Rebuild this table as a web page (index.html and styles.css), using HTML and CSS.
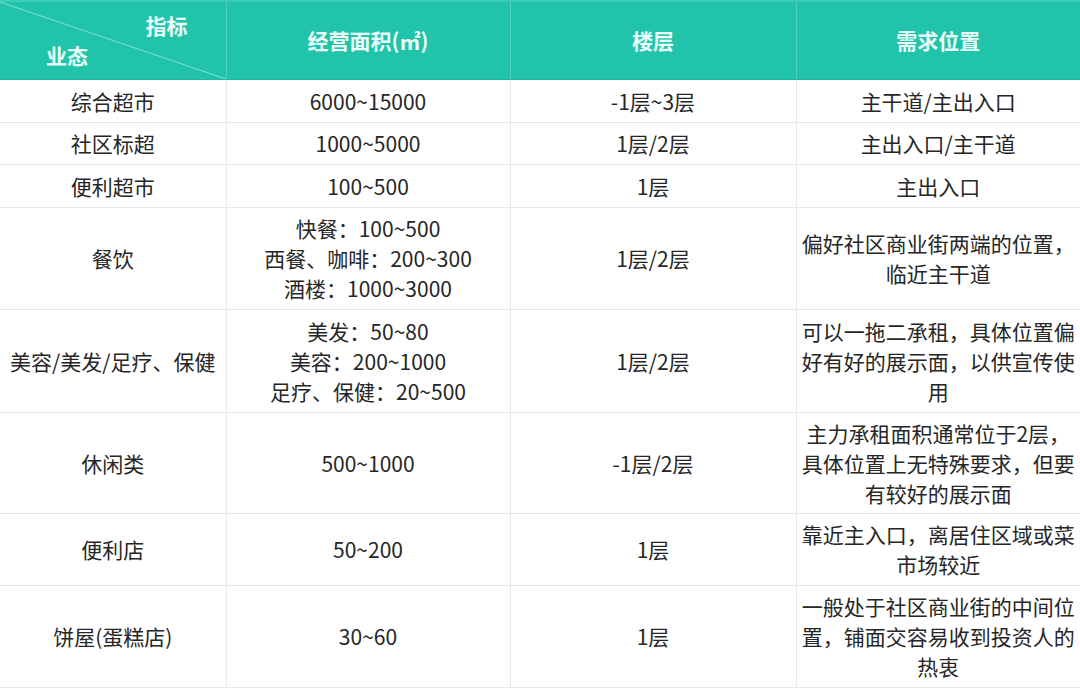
FILE: index.html
```html
<!DOCTYPE html>
<html lang="zh">
<head>
<meta charset="utf-8">
<link rel="stylesheet" href="styles.css">
</head>
<body>
<table class="grid">
  <colgroup>
    <col class="c1"><col class="c2"><col class="c3"><col class="c4">
  </colgroup>
  <thead>
    <tr class="head">
      <th class="diag">
        <div class="diag-inner">
          <span class="d-top">指标</span>
          <span class="d-bot">业态</span>
        </div>
      </th>
      <th>经营面积(㎡)</th>
      <th>楼层</th>
      <th>需求位置</th>
    </tr>
  </thead>
  <tbody>
    <tr class="h43"><td>综合超市</td><td>6000~15000</td><td>-1层~3层</td><td>主干道/主出入口</td></tr>
    <tr class="h42"><td>社区标超</td><td>1000~5000</td><td>1层/2层</td><td>主出入口/主干道</td></tr>
    <tr class="h43"><td>便利超市</td><td>100~500</td><td>1层</td><td>主出入口</td></tr>
    <tr class="h102"><td>餐饮</td><td>快餐：100~500<br>西餐、咖啡：200~300<br>酒楼：1000~3000</td><td>1层/2层</td><td>偏好社区商业街两端的位置，临近主干道</td></tr>
    <tr class="h103"><td class="tight">美容/美发/足疗、保健</td><td>美发：50~80<br>美容：200~1000<br>足疗、保健：20~500</td><td>1层/2层</td><td>可以一拖二承租，具体位置偏好有好的展示面，以供宣传使用</td></tr>
    <tr class="h101"><td>休闲类</td><td>500~1000</td><td>-1层/2层</td><td>主力承租面积通常位于2层，具体位置上无特殊要求，但要有较好的展示面</td></tr>
    <tr class="h72"><td>便利店</td><td>50~200</td><td>1层</td><td>靠近主入口，离居住区域或菜市场较近</td></tr>
    <tr class="h102"><td>饼屋(蛋糕店)</td><td>30~60</td><td>1层</td><td>一般处于社区商业街的中间位置，铺面交容易收到投资人的热衷</td></tr>
  </tbody>
</table>
</body>
</html>
```

FILE: styles.css
```css
html, body {
  margin: 0;
  padding: 0;
  background: #ffffff;
}
body {
  width: 1080px;
  height: 688px;
  overflow: hidden;
  font-family: "Noto Sans CJK SC", "Noto Sans", sans-serif;
  color: #262626;
}
.grid {
  width: 1080px;
  border-collapse: collapse;
  table-layout: fixed;
  font-size: 21px;
  line-height: 30px;
}
.c1 { width: 226px; }
.c2 { width: 284px; }
.c3 { width: 286px; }
.c4 { width: 284px; }

.grid th,
.grid td {
  text-align: center;
  vertical-align: middle;
  padding: 0 4px;
  border: 1px solid #e9e9e9;
}
.grid td.tight { padding: 0; }

.head {
  height: 78px;
  background: #22c3ab;
}
.head th {
  color: #e9fffa;
  font-weight: 700;
  font-size: 21px;
  border: 1px solid #4fd3bf;
  border-top: 2px solid #3ccfb8;
  border-bottom: 1px solid #1fb9a2;
}
.grid th:first-child,
.grid td:first-child { border-left: none; }
.grid th:last-child,
.grid td:last-child { border-right: none; }

.diag {
  padding: 0;
  background: linear-gradient(to top right, transparent calc(50% - 1px), #7fdfcf 50%, transparent calc(50% + 1px));
}
.diag-inner {
  height: 76px;
  display: flex;
  flex-direction: column;
  justify-content: space-between;
  padding: 8px 0 8px 0;
  box-sizing: border-box;
  line-height: 30px;
}
.d-top { align-self: flex-end; margin-right: 34px; }
.d-bot { align-self: flex-start; margin-left: 42px; }

.h42 { height: 42px; }
.h43 { height: 43px; }
.h72 { height: 72px; }
.h101 { height: 101px; }
.h102 { height: 102px; }
.h103 { height: 103px; }
```
